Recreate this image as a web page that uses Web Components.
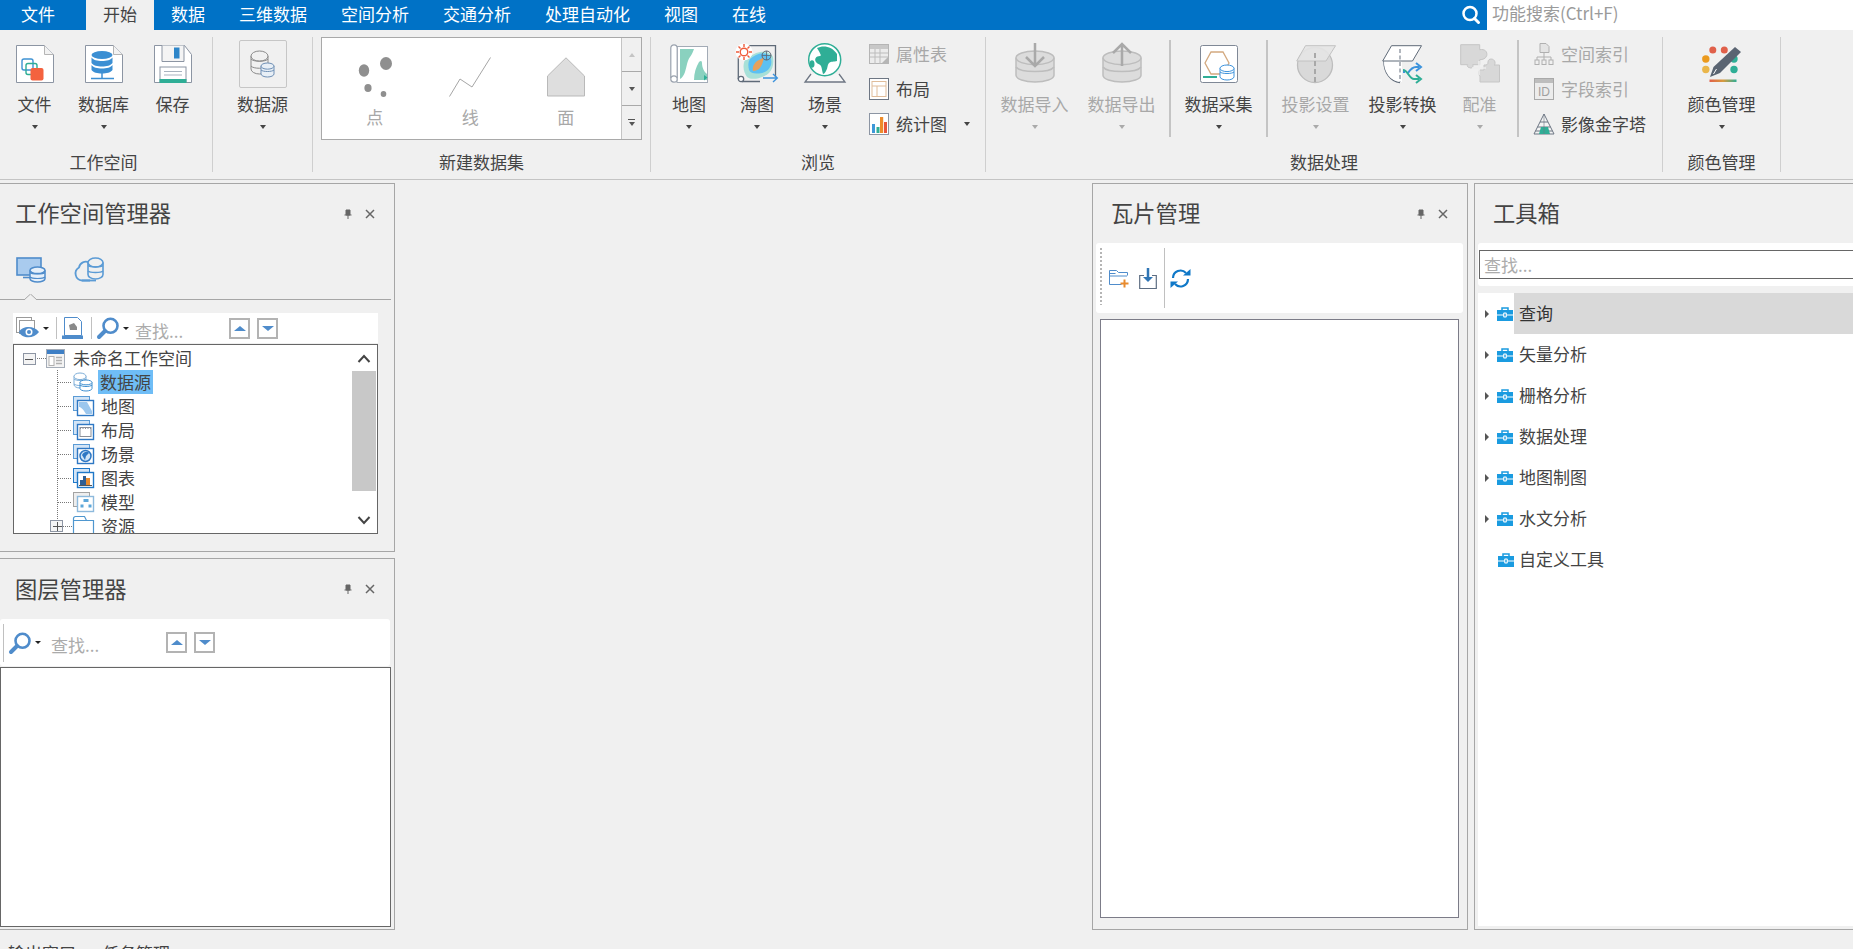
<!DOCTYPE html>
<html lang="zh"><head><meta charset="utf-8"><title>SuperMap</title>
<style>
html,body{margin:0;padding:0;height:949px;overflow:hidden;background:#f0f0f0;font-family:"Noto Sans CJK SC","Noto Sans",sans-serif;font-size:17px;color:#444}
</style></head><body>
<app-shell>
  <menu-bar slot="menu">
    <menu-tab first>文件</menu-tab><menu-tab active>开始</menu-tab><menu-tab>数据</menu-tab><menu-tab>三维数据</menu-tab><menu-tab>空间分析</menu-tab><menu-tab>交通分析</menu-tab><menu-tab>处理自动化</menu-tab><menu-tab>视图</menu-tab><menu-tab>在线</menu-tab>
  </menu-bar>
  <ribbon-bar slot="ribbon">
    <ribbon-group label="工作空间" w="213" lp="5">
      <ribbon-btn label="文件" icon="file" arrow w="69"></ribbon-btn>
      <ribbon-btn label="数据库" icon="db" arrow w="69"></ribbon-btn>
      <ribbon-btn label="保存" icon="save" w="69"></ribbon-btn>
    </ribbon-group>
    <ribbon-group label="数据源" hide-label w="100" center>
      <ribbon-btn label="数据源" icon="datasource" arrow w="69" boxed></ribbon-btn>
    </ribbon-group>
    <ribbon-group label="新建数据集" w="338" pad="8">
      <gallery-box>
        <gallery-item label="点" icon="gpoint"></gallery-item>
        <gallery-item label="线" icon="gline"></gallery-item>
        <gallery-item label="面" icon="garea"></gallery-item>
      </gallery-box>
    </ribbon-group>
    <ribbon-group label="浏览" w="335" pad="4">
      <ribbon-btn label="地图" icon="map" arrow w="68"></ribbon-btn>
      <ribbon-btn label="海图" icon="sea" arrow w="68"></ribbon-btn>
      <ribbon-btn label="场景" icon="scene" arrow w="68"></ribbon-btn>
      <small-list style="margin-left:10px">
        <small-btn label="属性表" icon="attr" disabled></small-btn>
        <small-btn label="布局" icon="layout"></small-btn>
        <small-btn label="统计图" icon="stats" arrow></small-btn>
      </small-list>
    </ribbon-group>
    <ribbon-group label="数据处理" w="677" pad="5">
      <ribbon-btn label="数据导入" icon="dbin" arrow disabled w="87"></ribbon-btn>
      <ribbon-btn label="数据导出" icon="dbout" arrow disabled w="87"></ribbon-btn>
      <ribbon-sep></ribbon-sep>
      <ribbon-btn label="数据采集" icon="collect" arrow w="87"></ribbon-btn>
      <ribbon-sep></ribbon-sep>
      <ribbon-btn label="投影设置" icon="projset" arrow disabled w="87"></ribbon-btn>
      <ribbon-btn label="投影转换" icon="projconv" arrow w="87"></ribbon-btn>
      <ribbon-btn label="配准" icon="register" arrow disabled w="67"></ribbon-btn>
      <ribbon-sep></ribbon-sep>
      <small-list style="margin-left:11px">
        <small-btn label="空间索引" icon="spidx" disabled></small-btn>
        <small-btn label="字段索引" icon="fdidx" disabled></small-btn>
        <small-btn label="影像金字塔" icon="pyramid"></small-btn>
      </small-list>
    </ribbon-group>
    <ribbon-group label="颜色管理" w="118" center>
      <ribbon-btn label="颜色管理" icon="color" arrow w="87"></ribbon-btn>
    </ribbon-group>
    <search-box></search-box>
  </ribbon-bar>

  <dock-column slot="left">
    <dock-panel heading="工作空间管理器" style="height:369px" no-left pad="15" tools>
      <source-tabs></source-tabs>
      <tree-toolbar style="margin:13px 16px 0 13px">
        <ui-icon name="eye" style="margin-left:3px"></ui-icon><drop-caret></drop-caret><tool-sep></tool-sep>
        <ui-icon name="docimg" style="margin-left:5px"></ui-icon><tool-sep></tool-sep>
        <ui-icon name="find" style="margin-left:5px"></ui-icon><drop-caret></drop-caret>
        <find-hint style="margin-left:6px;width:94px"></find-hint>
        <nav-arrow dir="up"></nav-arrow><nav-arrow dir="down" style="margin-left:7px"></nav-arrow>
      </tree-toolbar>
      <tree-box style="margin:1px 16px 0 13px">
        <tree-row kind="root" icon="tworkspace">未命名工作空间</tree-row>
        <tree-row icon="tds" selected>数据源</tree-row>
        <tree-row icon="tmap">地图</tree-row>
        <tree-row icon="tlayout">布局</tree-row>
        <tree-row icon="tscene">场景</tree-row>
        <tree-row icon="tchart">图表</tree-row>
        <tree-row icon="tmodel">模型</tree-row>
        <tree-row icon="tres" kind="last">资源</tree-row>
      </tree-box>
    </dock-panel>
    <dock-panel heading="图层管理器" style="height:372px" no-left pad="15" tools hh="60">
      <tree-toolbar tall style="margin:0 4px 0 0">
        <tool-sep style="margin-left:3px;margin-right:0;height:38px"></tool-sep>
        <ui-icon name="find" style="margin-left:5px"></ui-icon><drop-caret></drop-caret>
        <find-hint style="margin-left:10px;width:115px"></find-hint>
        <nav-arrow dir="up"></nav-arrow><nav-arrow dir="down" style="margin-left:7px"></nav-arrow>
      </tree-toolbar>
      <blank-box style="margin:1px 3px 2px 0;flex:1;border-color:#666"></blank-box>
    </dock-panel>
  </dock-column>

  <dock-panel slot="tile" heading="瓦片管理" pad="18" tools>
    <tile-toolbar>
      <ui-icon name="addfolder" style="margin-left:13px"></ui-icon>
      <ui-icon name="download" style="margin-left:10px"></ui-icon>
      <tool-sep style="height:60px;margin:0 0 0 6px"></tool-sep>
      <ui-icon name="refresh" style="margin-left:5px"></ui-icon>
    </tile-toolbar>
    <blank-box style="margin:6px 8px 11px 7px;flex:1"></blank-box>
  </dock-panel>

  <dock-panel slot="tools" heading="工具箱" no-right pad="18">
    <toolbox-search></toolbox-search>
    <toolbox-list>
      <tool-row selected arrow>查询</tool-row>
      <tool-row arrow>矢量分析</tool-row>
      <tool-row arrow>栅格分析</tool-row>
      <tool-row arrow>数据处理</tool-row>
      <tool-row arrow>地图制图</tool-row>
      <tool-row arrow>水文分析</tool-row>
      <tool-row>自定义工具</tool-row>
    </toolbox-list>
  </dock-panel>

  <bottom-tabs slot="bottom"><span>输出窗口</span><span>任务管理</span></bottom-tabs>
</app-shell>

<script>
const cyl=(x,y,w,h,fill,stroke,sw=1)=>{const r=Math.min(h*0.22,w*0.3);return `<path d="M${x} ${y+r}v${h-2*r}a${w/2} ${r} 0 0 0 ${w} 0v${-(h-2*r)}" fill="${fill}" stroke="${stroke}" stroke-width="${sw}"/><ellipse cx="${x+w/2}" cy="${y+r}" rx="${w/2}" ry="${r}" fill="${fill}" stroke="${stroke}" stroke-width="${sw}"/>`};
const ICONS={
file:[38,38,`<path d="M.5.5h28l9 9v28H.5z" fill="#fff" stroke="#8c95a3"/><path d="M28.5.5v9h9" fill="#f2f2f2" stroke="#b5b5b5"/><rect x="6" y="14" width="11" height="11" rx="2" fill="none" stroke="#3f93d3" stroke-width="1.4"/><rect x="10" y="18.500" width="11" height="11" rx="2" fill="none" stroke="#2fae96" stroke-width="1.4"/><rect x="14.500" y="23" width="13" height="12.500" rx="2" fill="#f4623f"/>`],
db:[38,38,`<path d="M.5.5h28l9 9v28H.5z" fill="#fff" stroke="#8c95a3"/><path d="M28.500.5v9h9" fill="#f2f2f2" stroke="#b5b5b5"/><ellipse cx="17" cy="10" rx="10.500" ry="4" fill="#3b8fd3"/><path d="M6.500 12.500c1.500 2.500 6 3.500 10.500 3.500s9-1 10.500-3.500V18c-1.500 2.500-6 3.500-10.500 3.500S8 20.500 6.500 18zM6.500 20c1.500 2.500 6 3.500 10.500 3.500S26 22.500 27.500 20v5c-1.500 2.500-6 3.500-10.500 3.500S8 27.500 6.500 25z" fill="#3b8fd3"/><path d="M17 28v5M6 33.500h23" stroke="#3b8fd3" stroke-width="1.500" fill="none"/>`],
save:[38,38,`<path d="M.5.5h30l7 9v28H.5z" fill="#fff" stroke="#8c95a3"/><path d="M8 .5v16h22V.5" fill="#f4f4f4" stroke="#8c95a3"/><rect x="20" y="2.500" width="5.500" height="11" fill="#2e86c9"/><rect x="6" y="22" width="26" height="15" fill="#fff" stroke="#8c95a3"/><path d="M10 26.500h18M10 30h18" stroke="#a9b3bf"/><rect x="5.500" y="34" width="27" height="4" fill="#2fae96"/>`],
datasource:[26,28,cyl(1,1,17,23,'#f0f0f0','#8a8a8a')+`<path d="M1 9c2 3 15 3 17 0M1 16c2 3 15 3 17 0" fill="none" stroke="#8a8a8a"/>`+cyl(11,13,13,14,'#e8eff6','#6e8fb5')+`<path d="M11 20c2 2 11 2 13 0" fill="none" stroke="#6e8fb5"/>`],
gpoint:[34,40,`<g fill="#8f8f8f"><ellipse cx="6" cy="13.500" rx="5.200" ry="6.200"/><ellipse cx="28" cy="6.500" rx="6" ry="6.500"/><ellipse cx="10" cy="31" rx="3.600" ry="4"/><ellipse cx="25.500" cy="37" rx="2.800" ry="3"/></g>`],
gline:[42,40,`<path d="M.5 39.500 11 22l12 8L41.500.5" fill="none" stroke="#a6a6a6"/>`],
garea:[38,40,`<path d="M.5 39V19L19 .8 37.500 19v20z" fill="#dedede" stroke="#b9b9b9"/>`],
map:[38,39,`<rect x="7" y="2.500" width="30.500" height="36" fill="#fff" stroke="#a3abb6"/><path d="M10 5h14c-1 3-2 5-4 8-3 4-3 9-5 15-1 3-3 6-5 7zM24 36c0-7 2-13 5-18 2-2 3-1 3 1 0 4 2 9 5 11v6z" fill="#8ad1bf"/><path d="M34 31l3.500 2.500-3.500 3z" fill="#2fae96"/><path d="M.8 34V4a3.200 3.200 0 0 1 6.400 0v30" fill="#fff" stroke="#9aa2ae" stroke-width="1.200"/><circle cx="4" cy="35" r="3.200" fill="#fff" stroke="#9aa2ae" stroke-width="1.200"/>`],
sea:[42,40,`<path d="M6 2.700h33.500V34M2.300 12v24M6 38.500h18" fill="none" stroke="#5f6a78" stroke-width="1.300"/><circle cx="5" cy="36" r="2.700" fill="#fff" stroke="#5f6a78" stroke-width="1.300"/><path d="M9 17c4-4 10-7 15-8 6-1 11 1 13 5 1 6 0 12-4 16-6 5-17 8-22 4-3-4-5-11-2-17z" fill="#a7e0d8"/><path d="M14 16c5-4 10-7 17-5 4 2 5 6 4 11-2 5-5 7-9 8-6 1-11 1-13-3-1-4-1-8 1-11z" fill="#5cc0f2"/><path d="M17 28c-1-5 2-9 6-11 2-1 4-2 5-3-1 5-2 9-5 12-2 1-4 2-6 2z" fill="#e8a15c"/><circle cx="30.500" cy="12.500" r="4.500" fill="none" stroke="#5d6775"/><path d="M26 12.500h9M30.500 8v9" stroke="#5d6775" stroke-width=".8"/><circle cx="8" cy="9" r="8.500" fill="#fff"/><circle cx="8" cy="9" r="3.800" fill="#fff" stroke="#ef5b3a" stroke-width="1.400"/><path d="M8 1v3M8 14v3M0 9h3M13 9h3M2.500 3.500l2 2M11.500 12.500l2 2M2.500 14.500l2-2M11.500 5.500l2-2" stroke="#ef5b3a" stroke-width="1.400"/><path d="M27 35h14M37 31l4.300 4-4.300 4" fill="none" stroke="#3d93dc" stroke-width="1.400"/>`],
scene:[42,40,`<path d="M7 31 1 39h40l-6-8" fill="#f6f6f6" stroke="#6d7683" stroke-width="1.300"/><circle cx="20.700" cy="16.700" r="16" fill="#fff" stroke="#2fae96" stroke-width="1.500"/><path d="M13 5c6-3 15-2 20 6v7c-3 1-6 0-8 2-2 2-1 5-3 8-1 2-2 3-3 3-1-3-1-6-2-8-1-2-4-2-5-4-2-3 0-6 4-6 2 0 0-3-3-8z" fill="#2fae96"/><ellipse cx="8" cy="21" rx="2.500" ry="3.800" fill="#2fae96"/>`],
attr:[20,20,`<rect x=".5" y=".5" width="19" height="19" fill="#ececec" stroke="#b5b5b5"/><rect x="1" y="1" width="18" height="4" fill="#c8c8c8"/><path d="M1 9h18M1 13h18M6 5v15M11 5v15" stroke="#bcbcbc"/><path d="M12 20l7-7v7z" fill="#b5b5b5"/>`],
layout:[20,22,`<rect x=".5" y=".5" width="19" height="21" fill="#fff" stroke="#6d7683"/><rect x="3" y="3.500" width="14" height="15" fill="#fff" stroke="#e0bd9b"/><path d="M3 8h14M8 8v10.500" stroke="#e0bd9b"/>`],
stats:[20,22,`<rect x=".5" y=".5" width="19" height="21" fill="#fff" stroke="#8c95a3"/><rect x="3" y="11" width="3" height="9" fill="#3e98d8"/><rect x="7.500" y="14" width="3" height="6" fill="#2fae96"/><rect x="11" y="4" width="3.200" height="16" fill="#ed8c2b"/><rect x="15" y="9" width="3" height="11" fill="#e7553a"/>`],
dbin:[40,40,cyl(1,8,38,31,'#dcdcdc','#bdbdbd',1.500)+`<path d="M1 24c4 6 34 6 38 0" fill="none" stroke="#bdbdbd" stroke-width="1.500"/><path d="M20 0v22M11 14l9 9 9-9" fill="none" stroke="#a9a9a9" stroke-width="2.500"/>`],
dbout:[40,40,cyl(1,8,38,31,'#dcdcdc','#bdbdbd',1.500)+`<path d="M1 24c4 6 34 6 38 0" fill="none" stroke="#bdbdbd" stroke-width="1.500"/><path d="M20 23V1M11 10l9-9 9 9" fill="none" stroke="#a9a9a9" stroke-width="2.500"/>`],
collect:[38,38,`<rect x=".5" y=".5" width="37" height="37" rx="2" fill="#fff" stroke="#7f8896"/><path d="M5 18l6-11h12l6 11-6 11H11z" fill="none" stroke="#d3a97f" stroke-width="1.300"/>`+cyl(20,20,14,15,'#fff','#3d93dc')+`<path d="M20 27c2 2 12 2 14 0" fill="none" stroke="#3d93dc"/><path d="M3 32h14" stroke="#2fae96" stroke-width="2"/>`],
projset:[40,38,`<circle cx="19" cy="20" r="17.500" fill="#d9d9d9" stroke="#bdbdbd" stroke-width="1.300"/><path d="M.7 16 9.500.7h30L30 16z" fill="#e4e4e4" fill-opacity=".9" stroke="#c2c2c2"/><path d="M19 8v30" stroke="#a8a8a8" stroke-width="2" stroke-dasharray="5 3"/>`],
projconv:[41,38,`<path d="M2 16a17.500 20.500 0 0 0 16 21.500" fill="#fff" stroke="#5f6a78" stroke-width="1.300"/><path d="M2 16a17 20 0 0 0 16 21h2V16z" fill="#fff"/><path d="M.7 16 9.500.7h30L30.500 16z" fill="#fff" stroke="#5f6a78"/><path d="M18 4v33" stroke="#7f8793" stroke-width="1.200" stroke-dasharray="4 2.500"/><path d="M21 27h2M26 28c2-3 4-6 8-6h3" fill="none" stroke="#3d93dc" stroke-width="2"/><path d="M34 18l5 4-5 4" fill="none" stroke="#3d93dc" stroke-width="2"/><path d="M21 25c5 0 6 9 11 9h5" fill="none" stroke="#2fae96" stroke-width="2"/><path d="M34 30l5 4-5 4" fill="none" stroke="#2fae96" stroke-width="2"/>`],
register:[40,39,`<path d="M.7.7h19v5c5-1 8 2 7 6-1 3-4 4-7 4v5h-7c1 2-1 4-3 3-2 0-3-2-2-3H.7z" fill="#d8d8d8" stroke="#c6c6c6"/><path d="M20 38v-6c-2-1-2-5 0-6h4v-5c3 0 4 0 4-3 0-4 6-4 7 0 0 2 0 3-1 3h5.500v17z" fill="#d8d8d8" stroke="#c6c6c6"/><path d="M19 17v14M12 24h14" stroke="#ededed" stroke-width="1.500"/>`],
spidx:[20,22,`<g fill="none" stroke="#b0b0b0"><path d="M6 .5h6l3 3v6H6z" fill="#e4e4e4"/><path d="M10 10v4M3 17v-3h14v3M10 14v3"/><rect x="1" y="17" width="4" height="4.500"/><rect x="8" y="17" width="4" height="4.500"/><rect x="15" y="17" width="4" height="4.500"/></g>`],
fdidx:[20,22,`<rect x=".5" y=".5" width="19" height="21" fill="#ececec" stroke="#a9a9a9"/><rect x="1" y="1" width="18" height="4" fill="#bdbdbd"/><text x="10" y="18" font-family="Liberation Sans" font-size="12" text-anchor="middle" fill="#a0a0a0">ID</text>`],
pyramid:[22,22,`<path d="M11 1 1 21h20z" fill="#f4f4f4" stroke="#6d7683"/><path d="M7 9h8M4.500 14h13M2.500 18h17" stroke="#6d7683"/><path d="M8 14h7l2 7H6z" fill="#2fae96"/><path d="M11 1v20" stroke="#6d7683" stroke-width=".6"/>`],
color:[40,38,`<circle cx="10.800" cy="5" r="3.500" fill="#e0604a"/><circle cx="22.300" cy="5" r="3.500" fill="#e0604a"/><circle cx="3.800" cy="14" r="3.700" fill="#eb9a1e"/><circle cx="3.800" cy="24.500" r="3.700" fill="#eab64a"/><circle cx="32" cy="14" r="3.700" fill="#2fae96"/><circle cx="32" cy="24.500" r="3.700" fill="#2fae96"/><path d="M8 32l3.500-10L33 2l6 5-21 21z" fill="#5a6472"/><path d="M11.500 29l3-5" stroke="#fff"/><rect x="7.500" y="34.500" width="27" height="2.500" fill="url(#cg)"/><defs><linearGradient id="cg" x1="0" x2="1"><stop offset="0" stop-color="#e0604a"/><stop offset=".5" stop-color="#d89a3e"/><stop offset="1" stop-color="#2fae96"/></linearGradient></defs>`],
eye:[24,22,`<rect x=".5" y=".5" width="15" height="15" fill="#fff" stroke="#9a9a9a"/><rect x="3.500" y="3.500" width="15" height="13" fill="#fff" stroke="#9a9a9a"/><path d="M3 15c3-6 15-7 20 0-5 7-17 7-20 0z" fill="#4f8ccb"/><circle cx="13" cy="15" r="3.500" fill="#fff"/><circle cx="13" cy="15" r="2" fill="#4f8ccb"/>`],
docimg:[22,22,`<path d="M2.500.5h13l4 4v14h-17z" fill="#fff" stroke="#4f8ccb"/><path d="M7 8l5-2 3 4v3H8z" fill="#8a8a8a"/><rect x="0" y="18.500" width="21" height="3.500" fill="#4f8ccb"/>`],
find:[23,22,`<circle cx="13.500" cy="8.800" r="7" fill="#fff" stroke="#4f8ccb" stroke-width="2.600"/><path d="M8 14l-6 6" stroke="#4f8ccb" stroke-width="4" stroke-linecap="round"/>`],
addfolder:[20,20,`<path d="M.5 16.500V2.500h7l2 2h9v3M.5 5.500h6M.5 16.500h12M.5 8H18" fill="none" stroke="#4f8ccb" stroke-width="1"/><path d="M11.500 15.500h8M15.500 11.500v8" stroke="#e88b2e" stroke-width="2"/>`],
download:[19,21,`<path d="M5 7.500H.7v13h16.600v-13H13" fill="none" stroke="#5d6d82" stroke-width="1.200"/><path d="M9 0v11" stroke="#2f75b5" stroke-width="2.500"/><path d="M4 9l5 5 5-5z" fill="#2f75b5"/>`],
refresh:[21,21,`<path d="M3 10a7.500 7.500 0 0 1 13-5" fill="none" stroke="#0f78c8" stroke-width="2.200"/><path d="M18 11a7.500 7.500 0 0 1-13 5" fill="none" stroke="#0f78c8" stroke-width="2.200"/><path d="M13 7.500h7.500V1z" fill="#0f78c8"/><path d="M8 13.500H.5V20z" fill="#0f78c8"/>`],
tworkspace:[19,19,`<rect x=".5" y=".5" width="18" height="18" fill="#f4f4f4" stroke="#a5adb8"/><rect x="1" y="1" width="17" height="4" fill="#3e7fc5"/><rect x="3" y="7.500" width="5" height="9" fill="#fff" stroke="#b0b0b0"/><path d="M10 8.500h6M10 11.500h6M10 14.500h6" stroke="#b0b0b0" stroke-width="1.500"/>`],
tds:[20,20,cyl(1,1,12,15,'#fff','#7eaed8')+`<path d="M1 7c2 2 10 2 12 0M1 12c2 2 10 2 12 0" fill="none" stroke="#7eaed8"/>`+cyl(7,8,12,11,'#fff','#3f8fd0')+`<path d="M7 13c2 2 10 2 12 0" fill="none" stroke="#3f8fd0"/>`],
tmap:[21,20,`<rect x=".5" y=".5" width="16" height="14" fill="#d4e5f6" stroke="#5b9bd5"/><rect x="4.500" y="4.500" width="16" height="15" fill="#fff" stroke="#2f78c4" stroke-width="1.400"/><path d="M6 6h8l5 9v3h-6c-3-5-5-7-7-7z" fill="#9cc7ee"/>`],
tlayout:[21,20,`<rect x=".5" y=".5" width="16" height="14" fill="#d4e5f6" stroke="#5b9bd5"/><rect x="4.500" y="4.500" width="16" height="15" fill="#fff" stroke="#2f78c4" stroke-width="1.400"/><rect x="7" y="7.500" width="11" height="9" fill="none" stroke="#8a8f98"/><path d="M7 8.500h11" stroke="#8a8f98" stroke-dasharray="1 1.500"/>`],
tscene:[21,20,`<rect x=".5" y=".5" width="16" height="14" fill="#d4e5f6" stroke="#5b9bd5"/><rect x="4.500" y="4.500" width="16" height="15" fill="#fff" stroke="#2f78c4" stroke-width="1.400"/><circle cx="12.500" cy="12" r="5.500" fill="#cfe4f6" stroke="#2f78c4" stroke-width="1.500"/><path d="M9 11c2-4 6-4 7-2l-3 3-1 4z" fill="#2f78c4"/>`],
tchart:[21,20,`<rect x=".5" y=".5" width="16" height="14" fill="#d4e5f6" stroke="#1f78c8"/><rect x="4.500" y="4.500" width="16" height="15" fill="#fff" stroke="#1f78c8" stroke-width="1.400"/><path d="M7 17v-5h3v5zM10 17V8h3v9z" fill="#2f5f94"/><path d="M13 17v-7h4v7z" fill="#e88b2e"/><path d="M6 17.500h13" stroke="#555"/>`],
tmodel:[21,20,`<rect x=".5" y=".5" width="16" height="14" fill="#eee" stroke="#a3a3a3"/><rect x="4.500" y="4.500" width="16" height="15" fill="#fff" stroke="#8db9dc" stroke-width="1.400"/><rect x="10.500" y="7" width="5" height="3" fill="#5ca7da"/><rect x="7.500" y="12.500" width="3" height="3" fill="#5ca7da"/><rect x="15.500" y="12.500" width="3" height="3" fill="#5ca7da"/>`],
tres:[21,20,`<path d="M.5 2.500a2 2 0 0 1 2-2h9l2 4h7v15H.5z" fill="#fff" stroke="#4f97cf" stroke-width="1.200"/><path d="M.5 4.500h13" stroke="#4f97cf"/>`],
toolbox:[16,14,`<path d="M5 3.500V1h6v2.500" fill="none" stroke="#1a9be0" stroke-width="1.500"/><path d="M0 3h16v4.500H0zM0 8.500h16V14H0z" fill="#1a9be0"/><rect x="6.200" y="5.500" width="3.600" height="5" rx="1" fill="#fff"/><rect x="7.300" y="6.600" width="1.400" height="2.800" fill="#1a9be0"/>`],
srv:[30,26,`<rect x="1" y="1" width="24" height="17" fill="#a9cbee" stroke="#4f8ccb" stroke-width="1.600"/><path d="M7 20.500h11" stroke="#4f8ccb" stroke-width="1.600"/>`+cyl(14,10,15,15,'#e6f0fa','#4f8ccb',1.500)+`<path d="M14 15.500c2 2 13 2 15 0M14 20c2 2 13 2 15 0" fill="none" stroke="#4f8ccb" stroke-width="1.200"/>`],
cloud:[30,26,`<path d="M16 23.500H8a7 7 0 0 1-3-13c1-5 6-7 10-5" fill="#f0f0f0" stroke="#5b9bd5" stroke-width="1.800"/><path d="M8 23.500h14" stroke="#5b9bd5" stroke-width="1.800"/>`+cyl(14,1,15,21,'#f0f0f0','#5b9bd5',1.600)+`<path d="M14 8.500c2 2 13 2 15 0M14 14c2 2 13 2 15 0" fill="none" stroke="#5b9bd5" stroke-width="1.300"/>`],
};
function def(name,css,html){
  customElements.define(name,class extends HTMLElement{
    constructor(){super();this.attachShadow({mode:'open'});}
    connectedCallback(){const h=typeof html==='function'?html(this):html;this.shadowRoot.innerHTML=`<style>${css}</style>${h}`;}
  });
}
def('ui-icon',':host{display:inline-flex;flex:none}svg{display:block;overflow:visible}',el=>{const [w,h,s]=ICONS[el.getAttribute('name')];return `<svg width="${w}" height="${h}" viewBox="0 0 ${w} ${h}">${s}</svg>`});
def('app-shell',`:host{display:block;height:949px;overflow:hidden}
.work{display:flex;height:747px;padding-top:3px;align-items:stretch}
.left{width:395px;flex:none}.tile{width:376px;margin-left:697px;flex:none;display:flex}.tools{flex:1;margin-left:6px;display:flex;min-width:0}
::slotted([slot=tile]),::slotted([slot=tools]){flex:1;min-width:0}`,
`<slot name="menu"></slot><slot name="ribbon"></slot><div class="work"><div class="left"><slot name="left"></slot></div><div class="tile"><slot name="tile"></slot></div><div class="tools"><slot name="tools"></slot></div></div><slot name="bottom"></slot>`);
def('menu-bar',':host{display:flex;height:30px;background:#0072c6;color:#fff}','<slot></slot>');
def('menu-tab',`:host{display:block;padding:0 17px 2px;line-height:28px;font-size:17px;color:#fff;flex:none}
:host([first]){margin-left:4px;margin-right:14px}:host([active]){background:#f0f0f0;color:#444}`,'<slot></slot>');
def('ribbon-bar',`:host{display:flex;position:relative;background:#f0f0f0;border-bottom:1px solid #c4c4c4;padding-top:7px;height:142px}`,'<slot></slot>');
def('search-box',`:host{position:absolute;left:1455px;top:-30px;right:0;height:30px;display:flex;align-items:center;font-size:17px;color:#9a9a9a}
.i{width:32px;display:flex;justify-content:center;flex:none}.b{flex:1;background:#fff;height:30px;line-height:26px;padding-left:5px}`,
`<div class="i"><svg width="20" height="20" viewBox="0 0 20 20"><circle cx="9" cy="8.500" r="6.500" fill="none" stroke="#fff" stroke-width="2.500"/><path d="M13.500 13.500l4 4" stroke="#fff" stroke-width="3" stroke-linecap="round"/></svg></div><div class="b">功能搜索(Ctrl+F)</div>`);
def('ribbon-group',`:host{display:flex;flex-direction:column;flex:none;box-sizing:border-box;border-right:1px solid #cfcfcf;height:135px}
.c{flex:1;display:flex;min-height:0}.l{height:20px;line-height:20px;text-align:center;font-size:17px;color:#444}
:host([center]) .c{justify-content:center}:host([hide-label]) .l{visibility:hidden}`,
el=>`<style>:host{width:${el.getAttribute('w')}px}.c{padding-left:${el.getAttribute('pad')||0}px}.l{padding-right:${el.getAttribute('lp')||0}px}</style><div class="c"><slot></slot></div><div class="l">${el.getAttribute('label')}</div>`);
def('ribbon-btn',`:host{display:flex;flex-direction:column;align-items:center;flex:none;color:#444;font-size:17px;padding-top:8px;box-sizing:border-box}
.ic{height:38px;display:flex;align-items:flex-end;justify-content:center}.t{margin-top:11px;height:20px;line-height:20px;white-space:nowrap}
.a{margin-top:11px;width:0;height:0;border:3px solid transparent;border-top:4px solid #444;border-bottom:0}
:host([disabled]){color:#a8a8a8}:host([disabled]) .a{border-top-color:#aaa}
.box{width:48px;height:48px;flex:none;margin-top:-5px;border:1px solid #c6c6c6;border-radius:2px;box-sizing:border-box;display:flex;align-items:center;justify-content:center}
.boxw{height:38px;display:flex;align-items:flex-start}`,
el=>{const ic=el.getAttribute('icon');const w=el.getAttribute('w');const s=`<style>:host{width:${w}px}</style>`;
  const icon=el.hasAttribute('boxed')?`<div class="boxw"><div class="box"><ui-icon name="${ic}"></ui-icon></div></div>`:`<div class="ic"><ui-icon name="${ic}"></ui-icon></div>`;
  return `${s}${icon}<div class="t">${el.getAttribute('label')}</div>${el.hasAttribute('arrow')?'<div class="a"></div>':''}`});
def('ribbon-sep',':host{display:block;flex:none;width:2px;height:97px;background:#c4c4c4;margin:3px 4px 0 4px}','');
def('small-list',':host{display:flex;flex-direction:column;flex:none;margin-top:-.5px}','<slot></slot>');
def('small-btn',`:host{display:flex;align-items:center;height:35px;font-size:17px;color:#444;white-space:nowrap}
.t{margin-left:7px;position:relative;top:-1px}.ic{width:20px;display:flex;justify-content:center}.a{margin-left:17px;width:0;height:0;border:3px solid transparent;border-top:4px solid #444;border-bottom:0}
:host([disabled]){color:#a8a8a8}`,
el=>`<div class="ic"><ui-icon name="${el.getAttribute('icon')}"></ui-icon></div><div class="t">${el.getAttribute('label')}</div>${el.hasAttribute('arrow')?'<div class="a"></div>':''}`);
def('gallery-box',`:host{display:flex;width:321px;height:103px;box-sizing:border-box;border:1px solid #a9a9a9;background:#fff}
.i{flex:1;display:flex;padding-left:5px}.s{width:19px;flex:none;display:flex;flex-direction:column;background:#f0f0f0;border-left:1px solid #c4c4c4}
.s div{flex:1;display:flex;align-items:center;justify-content:center;flex-direction:column;gap:2px}.s div+div{border-top:1px solid #a9a9a9}
.up{width:0;height:0;border:3.500px solid transparent;border-bottom:4px solid #c4c4c4;border-top:0}.dn{width:0;height:0;border:3.500px solid transparent;border-top:4px solid #555;border-bottom:0}.ln{width:7px;height:1px;background:#555}`,
`<div class="i"><slot></slot></div><div class="s"><div><span class="up"></span></div><div><span class="dn"></span></div><div><span class="ln"></span><span class="dn"></span></div></div>`);
def('gallery-item',`:host{display:flex;flex-direction:column;align-items:center;width:95.500px;padding-top:19px;box-sizing:border-box;color:#a8a8a8;font-size:17px}
.ic{height:40px}.t{height:20px;line-height:20px;margin-top:10px}`,
el=>`<div class="ic"><ui-icon name="${el.getAttribute('icon')}"></ui-icon></div><div class="t">${el.getAttribute('label')}</div>`);
def('dock-column',':host{display:flex;flex-direction:column;gap:6px}','<slot></slot>');
def('dock-panel',`:host{display:flex;flex-direction:column;box-sizing:border-box;border:1px solid #a6a6a6;height:747px;background:#f0f0f0;min-height:0}
:host([no-left]){border-left:0}:host([no-right]){border-right:0}
.h{display:flex;align-items:center;flex:none}.title{font-size:22.300px;color:#444;line-height:30px;padding-bottom:3px}
.tb{margin-left:auto;display:flex;align-items:center;gap:12px;padding-right:19px}
svg{display:block}`,
el=>{const hh=el.getAttribute('hh')||59;return `<style>.h{height:${hh}px}.title{padding-left:${el.getAttribute('pad')||15}px}</style><div class="h"><div class="title">${el.getAttribute('heading')}</div>${el.hasAttribute('tools')?`<div class="tb"><svg width="10" height="10" viewBox="0 0 10 10"><path d="M3 1h4v5H3zM1.500 6h7M5 6v4" fill="#666" stroke="#666" stroke-width="1"/></svg><svg width="10" height="10" viewBox="0 0 10 10"><path d="M1 1l8 8M9 1l-8 8" stroke="#666" stroke-width="1.500"/></svg></div>`:''}</div><slot></slot>`});
def('source-tabs',`:host{display:flex;flex:none;gap:28px;padding:14px 0 0 16px;height:57px;box-sizing:border-box;position:relative;margin-right:3px;border-bottom:1px solid #a6a6a6}
.n{position:absolute;left:24px;bottom:-1px;width:13px;height:6px}`,
`<ui-icon name="srv"></ui-icon><ui-icon name="cloud"></ui-icon><svg class="n" viewBox="0 0 13 6"><path d="M0 6l6.500-6L13 6z" fill="#f0f0f0"/><path d="M0 6l6.500-6L13 6" fill="none" stroke="#a6a6a6"/></svg>`);
def('tree-toolbar',`:host{display:flex;align-items:center;height:30px;background:#fff;flex:none}:host([tall]){height:47px;border-radius:3px}`,'<slot></slot>');
def('drop-caret',':host{display:block;width:0;height:0;border:3px solid transparent;border-top:3.500px solid #222;border-bottom:0;margin-left:3px;flex:none}','');
def('tool-sep',':host{display:block;width:1px;height:22px;background:#c0c0c0;margin:0 0 0 7px;flex:none}','');
def('find-hint',`:host{display:block;font-size:17px;color:#ababab;line-height:22px;flex:none;padding-top:5px}`,'查找...');
def('nav-arrow',`:host{display:flex;width:21px;height:21px;box-sizing:border-box;border:2px solid #b3b3b3;align-items:center;justify-content:center;flex:none;background:#fff}
.u{width:0;height:0;border:6px solid transparent;border-bottom:5px solid #4f8ccb;border-top:0}.d{width:0;height:0;border:6px solid transparent;border-top:5px solid #4f8ccb;border-bottom:0}`,
el=>`<span class="${el.getAttribute('dir')==='up'?'u':'d'}"></span>`);
def('tree-box',`:host{display:flex;height:190px;box-sizing:border-box;border:1px solid #666;background:#fff;flex:none;overflow:hidden}
.l{flex:1;overflow:hidden;padding-top:1px}.s{width:24px;margin-right:1px;flex:none;display:flex;flex-direction:column;background:#fff}
.b{height:26px;display:flex;align-items:center;justify-content:center}.t{height:120px;background:#c8c8c8}.sp{flex:1}`,
`<div class="l"><slot></slot></div><div class="s"><div class="b"><svg width="14" height="9" viewBox="0 0 14 9"><path d="M1.500 8 7 2l5.500 6" fill="none" stroke="#444" stroke-width="2"/></svg></div><div class="t"></div><div class="sp"></div><div class="b"><svg width="14" height="9" viewBox="0 0 14 9"><path d="M1.500 1 7 7l5.500-6" fill="none" stroke="#444" stroke-width="2"/></svg></div></div>`);
def('tree-row',`:host{display:flex;align-items:center;height:24px;font-size:17px;color:#444;white-space:nowrap}
svg.c{display:block;flex:none}.t{padding:0 2px;line-height:24px}:host([selected]) .t{background:#6fbdf6}`,
el=>{const k=el.getAttribute('kind');const ic=`<ui-icon name="${el.getAttribute('icon')}"></ui-icon>`;
 const box=(x,y)=>`<rect x="${x}.5" y="${y}.5" width="12" height="11" fill="#f4f4f4" stroke="#8d95a3"/>`;
 if(k==='root')return `<svg class="c" width="32" height="24"><path d="M21 12.500h11" stroke="#777" stroke-dasharray="1 1"/>${box(9,7)}<path d="M11 13.500h8" stroke="#555"/></svg>${ic}<span class="t" style="margin-left:6px">${el.textContent}</span>`;
 const last=k==='last';
 return `<svg class="c" width="59" height="24"><path d="M43.500 0V${last?12:24}M${last?49:44} 12.500h14" stroke="#777" stroke-dasharray="1 1"/>${last?box(36,6)+'<path d="M39 12.500h9M43.500 8v9" stroke="#555"/>':''}</svg>${ic}<span class="t" style="margin-left:5px">${el.textContent}</span>`});
def('blank-box',':host{display:block;box-sizing:border-box;border:1px solid #7c7c88;background:#fff;min-height:0}','');
def('tile-toolbar',`:host{display:flex;align-items:center;height:70px;margin:0 4px 0 3px;background:#fff;border-radius:3px;flex:none;position:relative}
.g{position:absolute;left:4px;top:5px;bottom:8px;width:2px;background:repeating-linear-gradient(#b5b5b5 0 2px,transparent 2px 4px)}`,`<div class="g"></div><slot></slot>`);
def('toolbox-search',`:host{display:flex;flex:none;height:43px;margin-left:3px;background:#fff;border-radius:3px 0 0 3px;align-items:center;padding-left:1px}
.i{flex:1;height:29px;box-sizing:border-box;border:1px solid #666;border-right:0;line-height:27px;padding-left:4px;color:#ababab;font-size:17px;background:#fff}`,'<div class="i">查找...</div>');
def('toolbox-list',`:host{display:block;flex:1;margin:7px 0 3px 3px;background:#fff;min-height:0}`,'<slot></slot>');
def('tool-row',`:host{display:flex;height:41px;font-size:17px;color:#444;align-items:stretch}
.lead{width:36px;flex:none;display:flex;align-items:center;padding-left:7px;box-sizing:border-box}
.tri{width:0;height:0;border:4.500px solid transparent;border-left:4.500px solid #555;border-right:0;margin-right:8px}.sp{width:4.500px;margin-right:8px}
.t{flex:1;line-height:39px;padding-left:5px}:host([selected]) .t{background:#d9d9d9;color:#333}`,
el=>`<div class="lead">${el.hasAttribute('arrow')?'<span class="tri"></span>':'<span class="sp"></span>'}<ui-icon name="toolbox"></ui-icon></div><div class="t"><slot></slot></div>`);
def('bottom-tabs',`:host{display:flex;gap:26px;padding-left:8px;height:40px;line-height:40px;font-size:17px;color:#444;align-items:flex-start;margin-top:3px}`,'<slot></slot>');
</script>
</body></html>
